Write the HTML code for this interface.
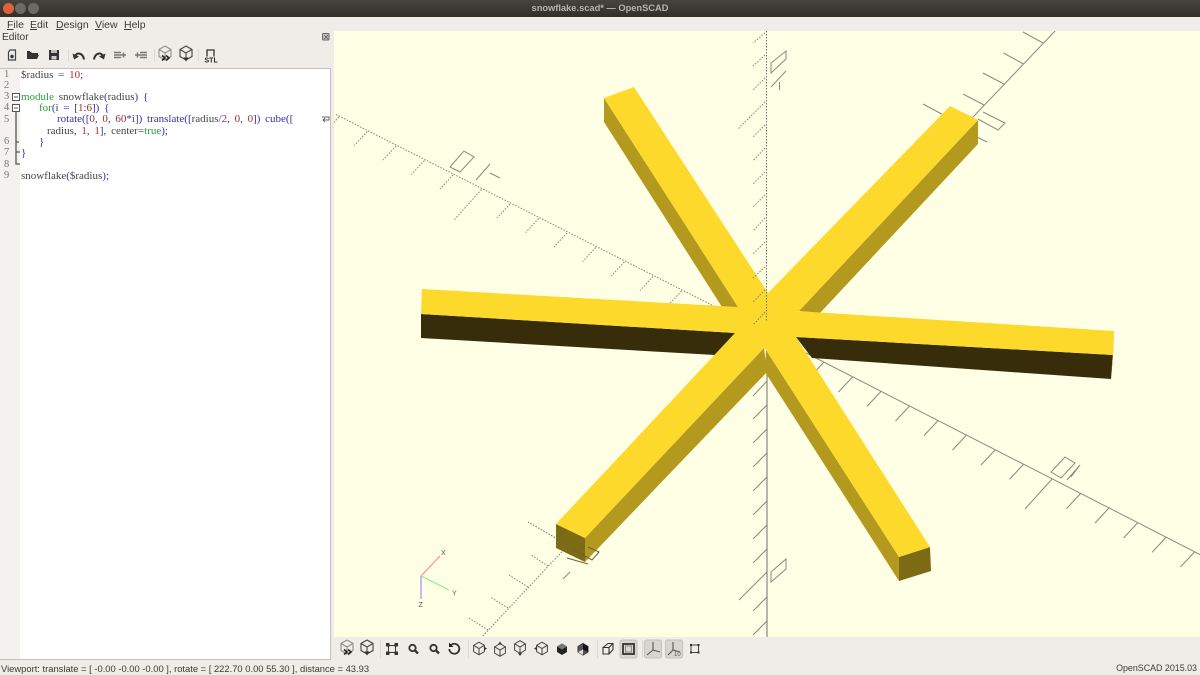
<!DOCTYPE html>
<html><head><meta charset="utf-8"><title>snowflake.scad* — OpenSCAD</title>
<style>
html,body{margin:0;padding:0;width:1200px;height:675px;overflow:hidden;background:#f0ece7;font-family:"Liberation Sans",sans-serif}
body{filter:blur(.3px)}
.a{position:absolute}
#title{left:0;top:0;width:1200px;height:17px;background:linear-gradient(#45443f,#302f2b)}
#title span{position:absolute;left:0;width:1200px;text-align:center;top:2px;font-size:9.3px;line-height:13px;font-weight:bold;color:#b8b4ac}
.b{position:absolute;top:3px;width:11px;height:11px;border-radius:50%;background:#6b6a65}
#menu span{position:absolute;top:18px;font-size:10.5px;line-height:14px;color:#3c3b37}
#menu u{text-decoration:underline}
#ed{left:0;top:68px;width:331px;height:592px;background:#fff;border:1px solid #c4c0ba;border-left:0;box-sizing:border-box;overflow:hidden}
#gut{left:0;top:0;width:20px;height:592px;background:#f4f2ef}
.n{position:absolute;left:4px;font:10.5px/11px "Liberation Serif",serif;color:#777}
.c{position:absolute;font:11px/12px "Liberation Serif",serif;white-space:pre;color:#444;word-spacing:2px}
.k{color:#2f9a3c}.f{color:#3030b0}.r{color:#a02c36}.o{color:#3030d0}
#vp{left:334px;top:31px;width:866px;height:606px;background:#ffffe5}
#st{left:0;top:660px;width:1200px;height:15px;line-height:17px;color:#3c3b37}
</style></head><body>
<div class="a" id="title"><i class="b" style="left:3px;background:#e0603a"></i><i class="b" style="left:15px"></i><i class="b" style="left:28px"></i><span>snowflake.scad* — OpenSCAD</span></div>
<div id="menu"><span style="left:7px"><u>F</u>ile</span><span style="left:30px"><u>E</u>dit</span><span style="left:56px"><u>D</u>esign</span><span style="left:95px"><u>V</u>iew</span><span style="left:124px"><u>H</u>elp</span></div>
<div class="a" style="left:2px;top:31px;font-size:10.2px;line-height:14px;color:#3c3b37">Editor</div>

<div class="a" id="ed"><div class="a" id="gut"></div>
<div class="n" style="top:0">1</div><div class="n" style="top:11px">2</div><div class="n" style="top:22px">3</div><div class="n" style="top:33px">4</div><div class="n" style="top:45px">5</div><div class="n" style="top:67px">6</div><div class="n" style="top:78px">7</div><div class="n" style="top:90px">8</div><div class="n" style="top:101px">9</div>
<div class="c" style="left:21px;top:0">$radius <span class="o">=</span> <span class="r">10</span><span class="f">;</span></div>
<div class="c" style="left:21px;top:22px"><span class="k">module</span> snowflake<span class="f">(</span>radius<span class="f">) {</span></div>
<div class="c" style="left:39px;top:33px"><span class="k">for</span><span class="f">(</span>i <span class="o">=</span> <span class="f">[</span><span class="r">1</span>:<span class="r">6</span><span class="f">]) {</span></div>
<div class="c" style="left:57px;top:44px"><span class="f">rotate([</span><span class="r">0</span><span class="f">,</span> <span class="r">0</span><span class="f">,</span> <span class="r">60</span><span class="o">*</span>i<span class="f">])</span> <span class="f">translate([</span>radius<span class="o">/</span><span class="r">2</span><span class="f">,</span> <span class="r">0</span><span class="f">,</span> <span class="r">0</span><span class="f">])</span> <span class="f">cube([</span></div>
<div class="c" style="left:47px;top:56px">radius<span class="f">,</span> <span class="r">1</span><span class="f">,</span> <span class="r">1</span><span class="f">],</span> center<span class="o">=</span><span class="k">true</span><span class="f">);</span></div>
<div class="c" style="left:39px;top:67px"><span class="f">}</span></div>
<div class="c" style="left:21px;top:78px"><span class="f">}</span></div>
<div class="c" style="left:21px;top:101px">snowflake<span class="f">(</span>$radius<span class="f">);</span></div>
</div>

<div class="a" id="vp"></div>
<svg class="a" style="left:0;top:0" width="1200" height="675" viewBox="0 0 1200 675">
<defs>
<clipPath id="vc"><rect x="334" y="31" width="866" height="606"/></clipPath>
<g id="cube" fill="none" stroke="#444" stroke-width="1.100"><path d="M0-7 6-3.500V3.500L0 7-6 3.500V-3.500ZM-6-3.500 0 0 6-3.500M0 0V7"/></g>
<g id="ren" fill="none"><use href="#cube" opacity=".55"/><path d="M-3 2.500 0 5-3 7.500M1 2.500 4 5 1 7.500" stroke="#222" stroke-width="1.600"/></g>
<g id="exp"><use href="#cube"/><path d="M-2.500 4.500H2.500L0 8.500Z" fill="#333"/></g>
</defs>

<!-- editor fold markers -->
<g stroke="#555" fill="none" stroke-width="1">
<rect x="12.500" y="93.500" width="7" height="7" fill="#fff"/><path d="M14 97H18"/>
<rect x="12.500" y="104.500" width="7" height="7" fill="#fff"/><path d="M14 108H18"/>
<path d="M16 112V164H20M16 142H19M16 152H20" stroke-width="1.300"/></g>
<path d="M322 117H329V120H323M325 118 323 120 325 122" fill="none" stroke="#666"/>
<g stroke="#666" fill="none"><rect x="322.500" y="33.500" width="6.500" height="6.500" rx="1" fill="#ccc"/><path d="M324 35 328 39M328 35 324 39"/></g>

<!-- editor toolbar -->
<g transform="translate(12,55)"><path d="M-2-5H3.500V5H-3.500V-3Z" fill="#eee" stroke="#444" stroke-width="1.200"/><circle cy="1.500" r="1.700" fill="#333"/></g>
<path d="M27 52H31L32 53H38V55H31L27 59Zm1 7 3-4H39L37 59Z" fill="#333"/><rect x="27" y="51" width="3" height="8" fill="#333"/>
<g transform="translate(54,55)"><rect x="-5" y="-5" width="10" height="10" fill="#333"/><rect x="-3" y="-5" width="6" height="3" fill="#bbb"/><rect x="-2.500" y="1" width="5" height="3.500" fill="#ccc"/></g>
<path d="M84 59.500C83 53 77 52 75.500 55.500" fill="none" stroke="#333" stroke-width="2"/><path d="M72.500 53.500 79 56.500 74 59.500Z" fill="#333"/>
<path d="M94 59.500C95 53 101 52 102.500 55.500" fill="none" stroke="#333" stroke-width="2"/><path d="M105.500 53.500 99 56.500 104 59.500Z" fill="#333"/>
<g stroke="#777" stroke-width="1.500" fill="none"><path d="M114 52.500H121M114 55H121M114 57.500H121M121 55H126M123.500 52.500V57.500"/><path d="M147 52.500H140M147 55H140M147 57.500H140M140 55H135M137.500 52.500V57.500" /></g>
<path d="M68.500 49V61M154.500 49V61M198.500 49V61" stroke="#ddd8d2" fill="none"/>
<use href="#ren" x="165" y="53"/><use href="#exp" x="186" y="53"/>
<path d="M207 56.500V50H214V56.500" fill="none" stroke="#333" stroke-width="1.300"/>
<text x="204.500" y="62.500" font-family="Liberation Sans,sans-serif" font-size="7" font-weight="bold" fill="#222">STL</text>

<g clip-path="url(#vc)">
<!-- X axis -->
<path d="M336 114.500 767 333" stroke="#808078" stroke-width="1" stroke-dasharray="1.500 1.500" fill="none"/>
<path d="M738.500 320l-13 14M710 305.500l-13 14M681.500 291l-13 14M653 276.500l-13 14M624.300 262l-13 14M595.700 247.500l-13 14M567 233l-13 14M538.600 218.500l-13 14M510 204l-13 14M481.500 189.500l-27 30M453 175l-13 14M424.400 160.500l-13 14M396 146l-13 14M367.300 131.500l-13 14M338.800 117l-13 14" stroke="#808078" stroke-dasharray="1.500 1.500" fill="none"/>
<path d="M767 333 1200 554.500M824 362l-14 15M852.500 377l-14 15M881 391.400l-14 15M909.500 406l-14 15M938 420.600l-14 15M966.500 435l-14 15M995 450l-14 15M1023.500 464.400l-14 15M1052 479l-27 30M1080.500 493.600l-14 15M1109 508l-14 15M1137.500 523l-14 15M1166 537.400l-14 15M1194.500 552l-14 15" stroke="#8a8a82" fill="none"/>
<!-- Y axis -->
<path d="M767 333 1056 30M964 126l-41-22M945 147l-20-11M984 105l-21-11M1004 84l-21-11M1023.500 64l-20-11M1043 43l-20-11" stroke="#8a8a82" fill="none"/>
<path d="M767 333 480 639M548 566l-17-11M528 587l-19-12M508 608l-18-11M488 630l-19-12" stroke="#808078" stroke-dasharray="1.500 1.500" fill="none"/>
<!-- Z solid -->
<path d="M767 333V637" stroke="#707070" fill="none"/>
<path d="M767 381l-14 15M767 405l-14 14M767 429l-14 14M767 453l-14 14M767 477l-14 14M767 501l-14 14M767 525l-14 14M767 549l-14 14M767 572l-28 28M767 597l-14 14M767 621l-14 14" stroke="#8a8a82" fill="none"/>
<!-- labels -->
<g fill="none" stroke="#8a8a82">
<path d="M464 151 474 157 460 172 450 167ZM476 180 490 164M490 173 500 178"/>
<path d="M983 112 1005 123 998 130 978 119M975 136 987 142"/>
<path d="M1065 457 1075 463 1061 478 1051 472ZM1067 480 1080 465M1071 477 1080 465"/>
<path d="M771 63 786 51V59L771 73ZM771 87 786 71M779.500 82V90"/>
<path d="M771 572 786 559V569L771 582Z"/>
</g>

<!-- arms: side faces -->
<path d="M604 98V122L722 307 738 307Z" fill="#b39a1f"/>
<path d="M978 120V144L820 313 799 311Z" fill="#b39a1f"/>
<path d="M585 538V562L767 372 764 348Z" fill="#b39a1f"/>
<path d="M766 350 765 372 899 581V557Z" fill="#b39a1f"/>
<path d="M556 524 585 538V562L556 548Z" fill="#7c6a14"/>
<path d="M899 557 930 547 931 571 899 581Z" fill="#7c6a14"/>
<path d="M421 314V338L715 355 735 333ZM796 337 812 358 1111 379 1113 355Z" fill="#372d0a"/>
<path d="M1114 331 1113 355 1111 379 1112.500 355Z" fill="#b39a1f"/>
<!-- arms: top faces -->
<path d="M604 98 634 87 768 293 950 106 978 120 799 311 796 311 1114 331 1113 355 796 337 930 547 899 557 766 350 764 348 585 538 556 524 735 333 421 314 422 289 738 307Z" fill="#fdd92c"/>

<!-- overlaid dotted lines -->
<path d="M766.500 31V321" stroke="#777" stroke-dasharray="1.500 1.500" fill="none"/>
<path d="M765 33l-12 10M765 55l-12 11M765 78l-12 12M765 102l-27 27M765 125l-12 12M765 148l-12 13M765 172l-12 12M765 195l-12 12M765 218l-12 13M765 242l-12 12M765 267l-12 11M765 290l-12 12M765 312l-12 13" stroke="#808078" stroke-dasharray="1.500 1.500" fill="none"/>
<path d="M568 545 528 522" stroke="#666" stroke-dasharray="1.500 1.500" fill="none"/>
<path d="M572 549 592 560 599 552 588 547M567 558 588 564" stroke="#6a6040" fill="none"/>
<path d="M563 579 570 572" stroke="#8a8a82" fill="none"/>

<!-- gizmo -->
<path d="M421 576 440 556" stroke="#ff8a8a" stroke-width="1.100"/>
<path d="M421 576 449 590" stroke="#8cf07c" stroke-width="1.100"/>
<path d="M421 576V599" stroke="#9a9cf4" stroke-width="1.300"/>
<g font-family="Liberation Sans,sans-serif" font-size="7" fill="#555"><text x="441" y="555">X</text><text x="452" y="595.500">Y</text><text x="418.500" y="607">Z</text></g>
</g>

<!-- bottom toolbar -->
<rect x="620" y="640" width="17" height="18" rx="2" fill="#d9d5d0" stroke="#c4c0ba"/>
<rect x="644.500" y="640" width="17" height="18" rx="2" fill="#d9d5d0" stroke="#c4c0ba"/>
<rect x="665.500" y="640" width="17" height="18" rx="2" fill="#d9d5d0" stroke="#c4c0ba"/>
<use href="#ren" x="347" y="647"/><use href="#exp" x="367" y="647"/>
<path d="M380.500 640V658M468.500 640V658M597.500 640V658M642.500 640V658" stroke="#ddd8d2"/>
<g transform="translate(392,649)" fill="none" stroke="#333"><rect x="-3.500" y="-3.500" width="7" height="7" stroke-width="1"/><g fill="#333" stroke="none"><rect x="-6" y="-6" width="3.500" height="3.500"/><rect x="2.500" y="-6" width="3.500" height="3.500"/><rect x="-6" y="2.500" width="3.500" height="3.500"/><rect x="2.500" y="2.500" width="3.500" height="3.500"/></g></g>
<g fill="none" stroke="#333" stroke-width="1.800"><circle cx="412.500" cy="648" r="3.200"/><path d="M415 650.500 418 653.500" stroke-width="2.400"/><circle cx="433.500" cy="648" r="3.200"/><path d="M436 650.500 439 653.500" stroke-width="2.400"/><path d="M451 645A5 5 0 1 1 449.300 649"/></g>
<path d="M449 642.500V647H453.500Z" fill="#222"/>
<use href="#cube" x="479" y="648.500" transform="translate(47.900 64.850) scale(.9)"/><path d="M484 646.500 487 648.500 484 650.500Z" fill="#333"/>
<use href="#cube" x="500" y="650" transform="translate(50 65) scale(.9)"/><path d="M498 644.500 500 641.500 502 644.500Z" fill="#333"/>
<use href="#cube" x="520" y="647" transform="translate(52 64.700) scale(.9)"/><path d="M518 653 520 656 522 653Z" fill="#333"/>
<use href="#cube" x="542" y="648.500" transform="translate(54.200 64.850) scale(.9)"/><path d="M537 646.500 534 648.500 537 650.500Z" fill="#333"/>
<path d="M562 643.500 567 646.500V652L562 655 557 652V646.500Z" fill="#222"/><path d="M557 646.500 562 649.500 567 646.500 562 643.500Z" fill="#777"/>
<path d="M583 643.500 588 646.500V652L583 655 578 652V646.500Z" fill="#555" stroke="#333"/><path d="M583 649.500V643.500L588 646.500V652Z" fill="#111"/><path d="M578 652 583 649.500V655Z" fill="#ddd"/>
<path d="M603 647.500H609V654H603ZM603 647.500 608 643.500H613V649.500L609 654M609 647.500 613 643.500" fill="none" stroke="#333" stroke-width="1.100"/>
<rect x="623" y="644" width="11" height="10" fill="none" stroke="#333" stroke-width="1.800"/><rect x="625.500" y="646" width="6" height="6" fill="none" stroke="#888"/>
<path d="M653 642V650L647 655M653 650 660 652" fill="none" stroke="#555" stroke-width="1.100"/>
<path d="M673 642V650L668 655M673 650 680 652" fill="none" stroke="#555" stroke-width="1.100"/>
<text x="674" y="656" font-family="Liberation Sans,sans-serif" font-size="6" fill="#555">10</text>
<rect x="691" y="645" width="7.500" height="7.500" fill="none" stroke="#444"/><g fill="#333"><rect x="690" y="644" width="2" height="2"/><rect x="697.500" y="644" width="2" height="2"/><rect x="690" y="651.500" width="2" height="2"/><rect x="697.500" y="651.500" width="2" height="2"/></g>
</svg>

<div class="a" id="st"><span class="a" style="left:1px;white-space:pre;font-size:9.4px">Viewport: translate = [ -0.00 -0.00 -0.00 ], rotate = [ 222.70 0.00 55.30 ], distance = 43.93</span><span class="a" style="right:3px;white-space:pre;font-size:8.9px">OpenSCAD 2015.03</span></div>
</body></html>
